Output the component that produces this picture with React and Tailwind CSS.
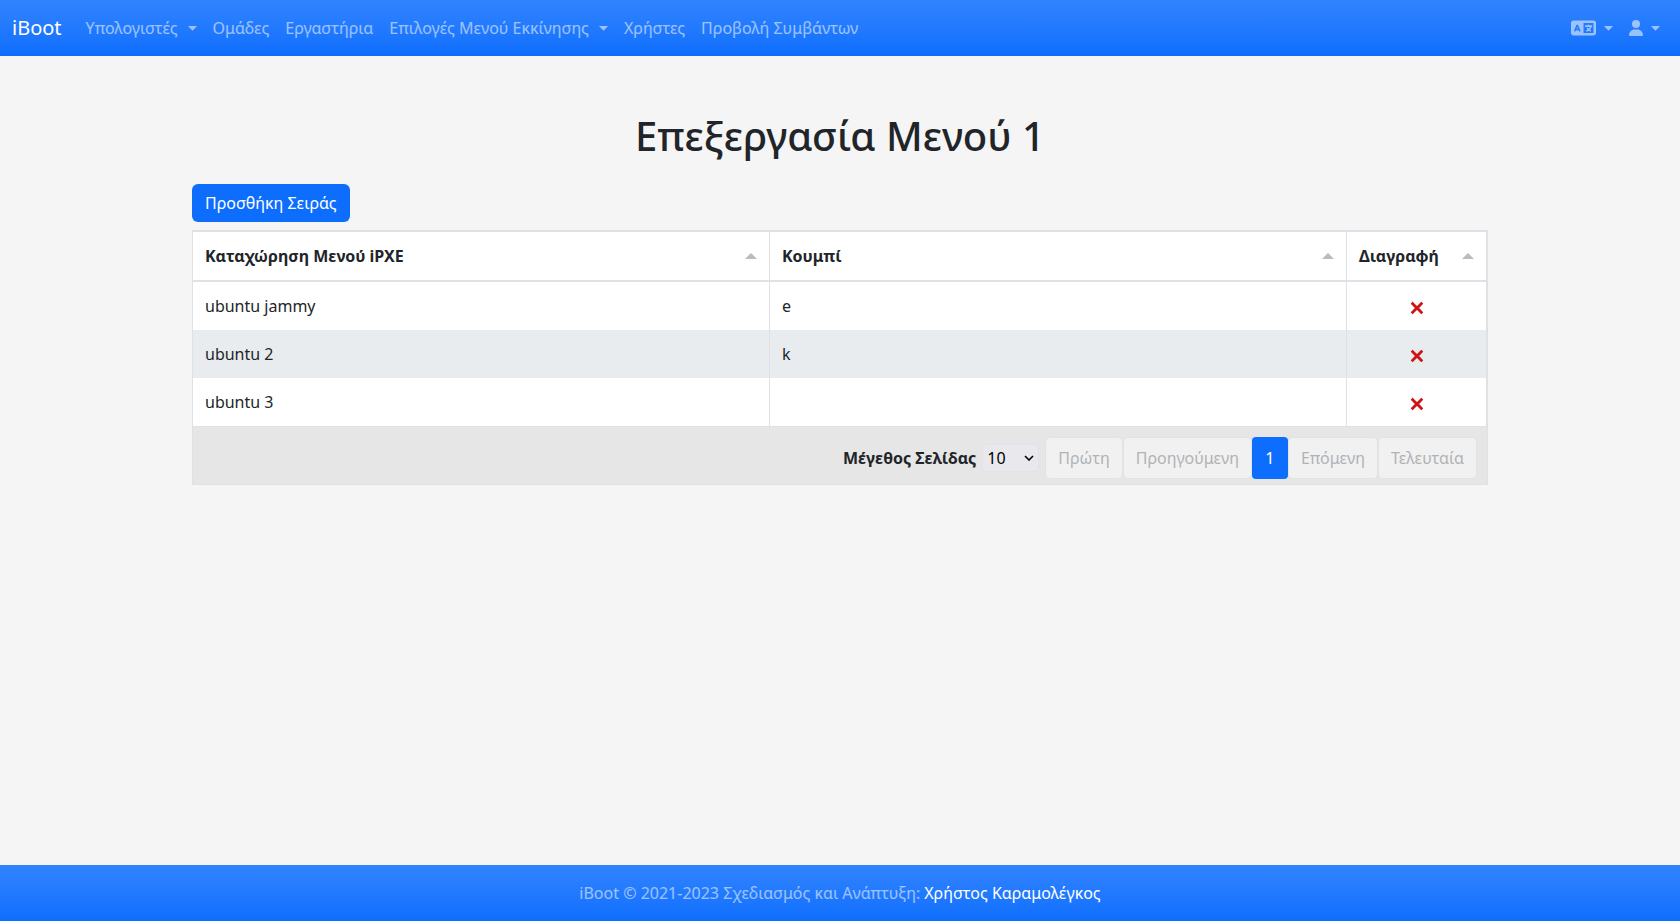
import { FaLanguage, FaUser } from "react-icons/fa6";

const rows = [
  { entry: "ubuntu jammy", key: "e" },
  { entry: "ubuntu 2", key: "k" },
  { entry: "ubuntu 3", key: "" },
];

const navItems = [
  { label: "Υπολογιστές", menu: true },
  { label: "Ομάδες" },
  { label: "Εργαστήρια" },
  { label: "Επιλογές Μενού Εκκίνησης", menu: true },
  { label: "Χρήστες" },
  { label: "Προβολή Συμβάντων" },
];

function Caret() {
  return (
    <svg width="9" height="5" viewBox="0 0 9 5" fill="currentColor" aria-hidden="true">
      <path d="M0 0h9L4.500 4.800z" />
    </svg>
  );
}

function NavItem({ label, menu }) {
  return (
    <a href="#" className="flex items-center gap-[10px] p-2 text-white/55">
      {label}
      {menu && <Caret />}
    </a>
  );
}

function HeaderCell({ children, className = "" }) {
  return (
    <th scope="col" className={`border-r border-b-2 border-[#dee2e6] px-3 py-0 text-left font-bold ${className}`}>
      <div className="flex h-12 items-center justify-between">
        {children}
        <svg width="12" height="6" viewBox="0 0 12 6" fill="#bbb" aria-hidden="true">
          <path d="M0 6h12L6 0z" />
        </svg>
      </div>
    </th>
  );
}

function CrossIcon() {
  return (
    <svg width="14" height="14" viewBox="0 0 24 24" fill="#ce1515" aria-hidden="true">
      <path d="M22.245,4.015c0.313,0.313,0.313,0.826,0,1.139l-6.276,6.27c-0.313,0.312-0.313,0.826,0,1.14l6.273,6.272c0.313,0.313,0.313,0.826,0,1.14l-2.285,2.277c-0.314,0.312-0.828,0.312-1.142,0l-6.271-6.271c-0.313-0.313-0.828-0.313-1.141,0l-6.276,6.267c-0.313,0.313-0.828,0.313-1.141,0l-2.282-2.28c-0.313-0.313-0.313-0.826,0-1.14l6.278-6.269c0.313-0.312,0.313-0.826,0-1.14L1.709,5.147c-0.314-0.313-0.314-0.827,0-1.14l2.284-2.278C4.308,1.417,4.821,1.417,5.135,1.73L11.405,8c0.314,0.314,0.828,0.314,1.141,0.001l6.276-6.267c0.312-0.312,0.826-0.312,1.141,0L22.245,4.015z" />
    </svg>
  );
}

function PageButton({ children }) {
  return (
    <button type="button" disabled className="h-[42px] rounded border border-[#e1e3e8] bg-[#f1f1f1] bg-clip-padding px-3 text-[#b0b3b6]">
      {children}
    </button>
  );
}

export default function App() {
  return (
    <div className="flex min-h-screen flex-col bg-[#f5f5f5] font-['Noto_Sans','Liberation_Sans',sans-serif] text-base text-[#212529]">
      <nav className="flex h-14 items-center bg-linear-to-b from-[#3184ff] to-[#0d6efd] px-3">
        <a href="#" className="mr-4 text-xl text-white">iBoot</a>
        <div className="flex flex-1">
          {navItems.map((item) => (
            <NavItem key={item.label} {...item} />
          ))}
        </div>
        <div className="flex items-center">
          <button type="button" aria-label="Γλώσσα" className="flex items-center gap-2 p-2 text-white/55">
            <FaLanguage className="h-5 w-[25px]" />
            <Caret />
          </button>
          <button type="button" aria-label="Λογαριασμός" className="flex items-center gap-2 p-2 text-white/55">
            <FaUser className="h-4 w-[14px]" />
            <Caret />
          </button>
        </div>
      </nav>

      <main className="mx-auto w-full max-w-[1320px] flex-1 px-3 pt-14">
        <h1 className="mb-6 text-center text-[40px] leading-[48px] font-medium">Επεξεργασία Μενού 1</h1>
        <button type="button" className="mb-2 block h-[38px] rounded-md bg-[#0d6efd] px-[13px] text-white">
          Προσθήκη Σειράς
        </button>

        <div className="border border-t-2 border-[#dee2e6] bg-white">
          <table className="w-full table-fixed border-separate border-spacing-0">
            <thead>
              <tr>
                <HeaderCell>Καταχώρηση Μενού iPXE</HeaderCell>
                <HeaderCell>Κουμπί</HeaderCell>
                <HeaderCell className="w-[140px]">Διαγραφή</HeaderCell>
              </tr>
            </thead>
            <tbody>
              {rows.map((row) => (
                <tr key={row.entry} className="even:bg-[#e8ecef]">
                  <td className="h-12 border-r border-[#dee2e6] px-3">{row.entry}</td>
                  <td className="border-r border-[#dee2e6] px-3">{row.key}</td>
                  <td className="border-r border-[#dee2e6] px-3">
                    <button type="button" aria-label={`Διαγραφή ${row.entry}`} className="mx-auto block pt-1">
                      <CrossIcon />
                    </button>
                  </td>
                </tr>
              ))}
            </tbody>
          </table>
          <div className="flex h-[58px] items-center justify-end border-t border-[#dee2e6] bg-[#e6e6e6] px-[10px] pt-1">
            <label htmlFor="page-size" className="font-bold">Μέγεθος Σελίδας</label>
            <div className="relative mx-[6px]">
              <select id="page-size" className="block h-7 w-[57px] appearance-none rounded border border-[#e1e3e8] bg-[#e9e9ed] pl-1 text-black">
                <option>10</option>
              </select>
              <svg width="10" height="6" viewBox="0 0 10 6" fill="none" stroke="#000" strokeWidth="1.6" aria-hidden="true" className="pointer-events-none absolute top-[11px] right-[5px]">
                <path d="M1 1l4 4 4-4" />
              </svg>
            </div>
            <PageButton>Πρώτη</PageButton>
            <PageButton>Προηγούμενη</PageButton>
            <button type="button" className="h-[42px] w-9 rounded-sm bg-[#0d6efd] text-white">1</button>
            <PageButton>Επόμενη</PageButton>
            <PageButton>Τελευταία</PageButton>
          </div>
        </div>
      </main>

      <footer className="flex h-14 items-center justify-center gap-1 bg-linear-to-b from-[#3184ff] to-[#0d6efd] text-white/55">
        <span>iBoot © 2021-2023 Σχεδιασμός και Ανάπτυξη:</span>
        <a href="#" className="text-white">Χρήστος Καραμολέγκος</a>
      </footer>
    </div>
  );
}
